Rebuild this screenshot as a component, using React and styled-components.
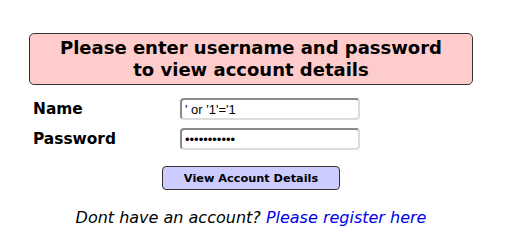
import React from "react";
import styled, { createGlobalStyle } from "styled-components";

const Global = createGlobalStyle`
  html, body {
    margin: 0;
    padding: 0;
    background: #ffffff;
  }
  body {
    font-family: "DejaVu Sans", sans-serif;
    color: #000;
  }
`;

const Page = styled.div`
  padding: 33px 0 0 29px;
  width: 444px;
`;

const Notice = styled.div`
  box-sizing: border-box;
  height: 52px;
  padding: 3px 0;
  background: #ffcccc;
  border: 1px solid #333333;
  border-radius: 5px;
  text-align: center;
  font-size: 18px;
  line-height: 22px;
  font-weight: bold;
`;

const Form = styled.form`
  margin: 13px 0 0 4px;
  display: grid;
  grid-template-columns: 147px 180px;
  row-gap: 8px;
  align-items: center;
`;

const Label = styled.label`
  font-size: 15.4px;
  font-weight: bold;
`;

const Field = styled.input`
  box-sizing: border-box;
  width: 180px;
  height: 22px;
  margin: 0;
  padding: 1px 3px;
  border: 2px solid;
  border-color: #8a8a8a #dcdcdc #dcdcdc #8a8a8a;
  border-radius: 4px;
  font-family: "Liberation Sans", Arial, sans-serif;
  font-size: 13px;
  color: #000;
  background: #fff;
  outline: none;
`;

const Actions = styled.div`
  grid-column: 1 / -1;
  display: flex;
  justify-content: center;
  margin: 8px 0 0 -4px;
  width: 444px;
`;

const SubmitButton = styled.button`
  box-sizing: border-box;
  width: 178px;
  height: 24px;
  padding: 0;
  background: #ccccff;
  border: 1px solid #333333;
  border-radius: 4px;
  font-family: "DejaVu Sans", sans-serif;
  font-size: 11.3px;
  font-weight: bold;
  color: #000;
  cursor: pointer;
`;

const Footer = styled.p`
  margin: 18px 0 0;
  text-align: center;
  font-size: 16px;
  font-style: italic;
`;

const RegisterLink = styled.a`
  color: #0000ee;
  text-decoration: none;
`;

export default function App() {
  return (
    <>
      <Global />
      <Page>
        <Notice>
          Please enter username and password
          <br />
          to view account details
        </Notice>
        <Form onSubmit={(e) => e.preventDefault()}>
          <Label htmlFor="login">Name</Label>
          <Field id="login" type="text" defaultValue="' or '1'='1" />
          <Label htmlFor="password">Password</Label>
          <Field id="password" type="password" defaultValue="' or '1'='1" />
          <Actions>
            <SubmitButton type="submit">View Account Details</SubmitButton>
          </Actions>
        </Form>
        <Footer>
          Dont have an account?{" "}
          <RegisterLink href="#">Please register here</RegisterLink>
        </Footer>
      </Page>
    </>
  );
}
